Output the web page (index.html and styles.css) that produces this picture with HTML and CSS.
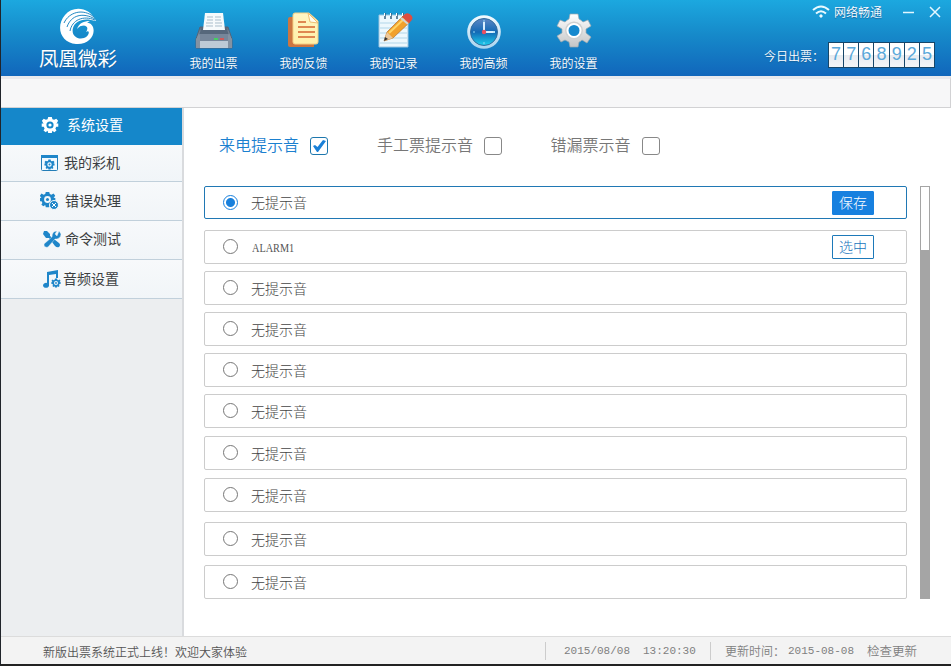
FILE: index.html
```html
<!DOCTYPE html>
<html lang="zh-CN">
<head>
<meta charset="utf-8">
<title>凤凰微彩</title>
<link rel="stylesheet" href="styles.css">
</head>
<body>
<svg class="defs" width="0" height="0">
  <defs>
    <linearGradient id="metal" x1="0" y1="0" x2="0" y2="1"><stop offset="0" stop-color="#fff"/><stop offset="1" stop-color="#c3c5c6"/></linearGradient>
    <linearGradient id="ring" x1="0" y1="0" x2="0" y2="1"><stop offset="0" stop-color="#f4fbff"/><stop offset="1" stop-color="#a9d3ee"/></linearGradient>
    <linearGradient id="body" x1="0" y1="0" x2="0" y2="1"><stop offset="0" stop-color="#59697c"/><stop offset=".5" stop-color="#8e9cac"/><stop offset="1" stop-color="#c4ced8"/></linearGradient>
    <linearGradient id="face" x1="0" y1="0" x2="0" y2="1"><stop offset="0" stop-color="#5e87c4"/><stop offset=".5" stop-color="#1269b5"/><stop offset="1" stop-color="#1ed0ee"/></linearGradient>
    <linearGradient id="paper" x1="0" y1="0" x2="0" y2="1"><stop offset="0" stop-color="#fff5c4"/><stop offset="1" stop-color="#fff0a8"/></linearGradient>
    <symbol id="gear" viewBox="-10 -10 20 20">
      <path fill-rule="evenodd" d="M-2-9H2L2.7-6.5L4.6-5.7L7-7L9-4.6 7.8-2.4 7-1.8H9.2V2H7L6 4 7.2 6.2 4.8 8 2.7 6.5 2 9H-2L-2.7 6.5-4.8 8-7.2 6.2-6 4-7 2H-9.2V-1.8H-7L-7.8-2.4-9-4.6-7-7-4.6-5.7-2.7-6.5ZM0-4A4 4 0 1 0 0 4A4 4 0 1 0 0-4Z"/><circle r="1.8"/>
    </symbol>
  </defs>
</svg>
<div class="window">
  <header class="header">
    <div class="brand">
      <svg class="brand-mark" width="38" height="38" viewBox="0 0 38 38" fill="#fff">
        <path d="M37 14C31 0 14-2 6 8C-4 20 2 36 17 37C29 38 37 29 34 20C32 15 26 14 21 19C28 17 30 21 27 25C31 22 31 29 25 31C18 33 12 28 14 21C16 14 24 10 37 14Z"/>
        <path d="M18 22C20 16 25 14 31 14C28 15 28 17 26 18C22 18 20 20 18 22Z"/>
        <path d="M5 16C10 5 24 1 35 10M8 20C12 8 24 5 36 12M11 24C13 13 24 8 36 13" fill="none" stroke="#2289c4" stroke-width="1"/>
      </svg>
      <div class="brand-name">凤凰微彩</div>
    </div>
    <nav class="nav">
      <a class="nav-item">
        <svg width="40" height="40" viewBox="0 0 40 40">
          <path d="M6 17H34L38 29V38H2V29Z" fill="url(#body)" stroke="#53657a"/><path d="M8 17H32L35 25H5Z" fill="#56677b"/>
          <path d="M11 3H29L31 20H9Z" fill="#f6fafc"/><path d="M13 7h6m2 0h6M13 10h6m2 0h6M12 13h7m2 0h7M12 16h7m2 0h7" stroke="#a9bdcb"/>
          <path d="M5 24H35V31H5Z" fill="#76869a"/><path d="M6 31H34V38H6Z" fill="#bdcad6"/><path d="M2 29L6 24V38H2ZM38 29L34 24V38H38Z" fill="#8492a2"/><path d="M20 29h4" stroke="#45cf62" stroke-width="2"/><path d="M26 29h4" stroke="#ce5959" stroke-width="2"/>
        </svg><span>我的出票</span></a>
      <a class="nav-item">
        <svg width="40" height="40" viewBox="0 0 40 40">
          <path d="M6 7H30V37H6Q4 37 4 35V9Q4 7 6 7Z" fill="#cc7641"/><path d="M11 3H25L34 11V32Q34 34 32 34H11Q9 34 9 32V5Q9 3 11 3Z" fill="url(#paper)" stroke="#f5cf84"/>
          <path d="M24 3L26 12L34 13Z" fill="#fffdf0" stroke="#eebd73"/><path d="M14 12h8M14 17h17M14 22h17M14 27h17" stroke="#df8751" stroke-width="2"/>
        </svg><span>我的反馈</span></a>
      <a class="nav-item">
        <svg width="40" height="40" viewBox="0 0 40 40">
          <path d="M5 5H34V37H5Z" fill="#edf8fd" stroke="#9ac4df"/><path d="M6 13h27M6 18h27M6 23h27M6 28h27M6 33h27" stroke="#b1d6e9"/>
          <path d="M11 3v6M17 3v6M23 3v6M29 3v6" stroke="#365e7c" stroke-width="1.5"/><path d="M10.500 3v3M16.500 3v3M22.500 3v3M28.500 3v3" stroke="#fff"/>
          <path d="M10 31L13 22L29 6L36 12L19 28Z" fill="#f1a12b" stroke="#aa6624" stroke-width=".6"/><path d="M15 23L31 8" stroke="#ffd363" stroke-width="2"/><path d="M10 31L13 22L19 28Z" fill="#ebc89a"/><path d="M10 31L11 27L14 29Z" fill="#333"/><path d="M28 7L31 4Q34 2 37 5T37 11L35 13Z" fill="#dd4d40"/><path d="M27 8L34 14" stroke="#d3d4d4" stroke-width="2"/>
        </svg><span>我的记录</span></a>
      <a class="nav-item">
        <svg width="40" height="40" viewBox="0 0 40 40"><circle cx="20" cy="22" r="16.800" fill="url(#ring)"/><circle cx="20" cy="22" r="13.500" fill="url(#face)" stroke="#336c9e"/><path d="M19 12H21V21H31V23H19Z" fill="#d8efff"/><path d="M20 10v2M20 32v2M9 22h2M29 22h2" stroke="#93d6f3"/><circle cx="20" cy="22" r="2.200" fill="#eb5061"/></svg><span>我的高频</span></a>
      <a class="nav-item">
        <svg width="40" height="40" viewBox="-20 -20 40 40"><path d="M-4-16H4L5-11Q7-10 9-8L14-10 17-4 12-1V3L17 7 13 13 8 10Q6 12 5 12L4 17H-4L-5 12Q-7 11-9 10L-13 12-17 6-12 3V-1L-17-4-14-10-9-8Q-7-10-5-11Z" fill="url(#metal)" stroke="#9ba9b0" stroke-width=".7"/><circle r="9" cy=".5" fill="#cfd0d0"/><circle r="6.500" cy=".5" fill="#1689ce" stroke="#fff" stroke-width="2"/></svg><span>我的设置</span></a>
    </nav>
    <div class="status">
      <div class="window-controls">
        <svg class="wifi" width="18" height="14" viewBox="0 0 18 14" fill="none" stroke="#e9faff" stroke-width="2"><path d="M1 5Q9-2 17 5M4 8.500Q9 4 14 8.500"/><circle cx="9" cy="11" r="1.200" fill="#fff" stroke-width="1"/></svg>
        <span class="network">网络畅通</span>
        <svg class="controls" width="39" height="14" viewBox="0 0 39 14" fill="none" stroke="#e3f7ff" stroke-width="1.500"><path d="M0 7.500H11M27 2L37 12M37 2L27 12"/></svg>
      </div>
      <div class="counter"><span>今日出票：</span><div class="digits"><b>7</b><b>7</b><b>6</b><b>8</b><b>9</b><b>2</b><b>5</b></div></div>
    </div>
  </header>
  <div class="subbar"></div>
  <div class="main">
    <aside class="sidebar">
      <a class="side-item active"><svg width="18" height="18"><use href="#gear"/></svg><span>系统设置</span></a>
      <a class="side-item"><svg width="18" height="18" viewBox="0 0 18 18"><rect x=".5" y="1.500" width="16" height="15" rx="1" fill="#f3faff" stroke="#237db7"/><path d="M0 1h17v3H0z"/><use href="#gear" x="3" y="5" width="11" height="11"/></svg><span>我的彩机</span></a>
      <a class="side-item errors"><svg width="19" height="18" viewBox="0 0 19 18"><use href="#gear" x="-1" y="-1" width="17" height="17"/><circle cx="14" cy="13" r="4.500" stroke="#f3f7fa"/><path d="M12 11L16 15M16 11L12 15" stroke="#fff"/></svg><span>错误处理</span></a>
      <a class="side-item tools"><svg width="18" height="18" viewBox="0 0 18 18"><path d="M1 1L4 1L7 4V6L16 13Q18 15 16 17Q14 18 12 16L6 8H3L0 4Z"/><path d="M16 1L18 4Q18 8 14 9L12 9L5 17Q1 18 1 14L9 7Q9 1 14 1L12 4L14 6Z" stroke="#f3f7fa" stroke-width=".4"/></svg><span>命令测试</span></a>
      <a class="side-item audio"><svg width="18" height="18" viewBox="0 0 18 18"><path d="M4 2L15 0V8H13V4L6 5V15A3 2.500 0 1 1 4 13Z"/><use href="#gear" x="8" y="8" width="10" height="10"/></svg><span>音频设置</span></a>
    </aside>
    <main class="content">
      <div class="options">
        <label class="option selected">来电提示音<svg class="box" width="18" height="18" viewBox="1 1 16 16"><path d="M3 9L5 8L7.500 10L13 3L16 4L8 15H7Z" fill="#1980d8"/></svg></label>
        <label class="option">手工票提示音<i class="box"></i></label>
        <label class="option">错漏票示音<i class="box"></i></label>
      </div>
      <div class="list-area">
        <div class="list">
          <div class="row chosen"><i class="radio"></i><span>无提示音</span><button class="btn primary">保存</button></div>
          <div class="row second"><i class="radio"></i><span class="latin">ALARM1</span><button class="btn">选中</button></div>
          <div class="row"><i class="radio"></i><span>无提示音</span></div>
          <div class="row"><i class="radio"></i><span>无提示音</span></div>
          <div class="row"><i class="radio"></i><span>无提示音</span></div>
          <div class="row"><i class="radio"></i><span>无提示音</span></div>
          <div class="row gap-8"><i class="radio"></i><span>无提示音</span></div>
          <div class="row gap-8"><i class="radio"></i><span>无提示音</span></div>
          <div class="row gap-10"><i class="radio"></i><span>无提示音</span></div>
          <div class="row gap-9"><i class="radio"></i><span>无提示音</span></div>
        </div>
        <div class="scrollbar"><div class="thumb"></div></div>
      </div>
    </main>
  </div>
  <footer class="footer">
    <span class="notice">新版出票系统正式上线！欢迎大家体验</span>
    <div class="clock"><span>2015/08/08</span><span>13:20:30</span></div>
    <div class="update"><span>更新时间：</span><span class="date">2015-08-08</span><span class="check">检查更新</span></div>
  </footer>
</div>
</body>
</html>
```
FILE: styles.css
```css
* { box-sizing: border-box; }
body { margin: 0; overflow: hidden; font-family: "Liberation Sans", "Noto Sans CJK SC", sans-serif; font-size: 12px; font-weight: 400; }
.defs { position: absolute; }
.window { width: 951px; height: 666px; display: flex; flex-direction: column; border-left: 1px solid #20242a; border-bottom: 2px solid #222; background: #fff; }
.header { height: 76px; flex: none; display: flex; color: #fff; background: linear-gradient(#1ca8df, #168aca 45%, #1166bb); text-shadow: 0 1px 1px #17609b; }
.brand { width: 168px; padding: 7px 0 0 38px; }
.brand-mark { display: block; margin-left: 20px; }
.brand-name { font-size: 19.5px; line-height: 28px; white-space: nowrap; }
.nav { display: flex; width: 450px; font-weight: 350; }
.nav-item { width: 90px; padding-top: 10px; display: flex; flex-direction: column; align-items: center; }
.nav-item span { line-height: 18px; margin-top: 5px; margin-right: 1px; }
.nav-item svg { margin-right: 1px; }
.status { flex: 1; display: flex; flex-direction: column; font-weight: 350; }
.window-controls { display: flex; align-items: center; justify-content: flex-end; height: 23px; padding-right: 9px; }
.network { margin-left: 4px; }
.controls { margin-left: 21px; }
.counter { display: flex; align-items: center; justify-content: flex-end; margin-top: 19px; padding-right: 16px; height: 26px; }
.counter > span { margin-right: 4px; }
.digits { display: flex; gap: 1px; padding: 1px; background: #164669; width: 107px; height: 26px; }
.digits b { flex: 1; font: 18px/23px "Liberation Sans", sans-serif; text-align: center; color: #5ba9da; background: linear-gradient(#fff 50%, #e7ebf0 50%, #f4f5f7); text-shadow: none; }
.subbar { height: 32px; flex: none; background: #f7f7f8; border-top: 3px solid #e9e9ed; border-bottom: 1px solid #d2d2d4; border-right: 1px solid #d2d2d4; }
.main { flex: 1; min-height: 0; display: flex; }
.sidebar { width: 183px; flex: none; background: #eceef0; border-right: 2px solid #d9dbde; }
.side-item { height: 39px; display: flex; align-items: center; padding-left: 40px; gap: 6px; font-size: 14px; color: #3c3f42; border-bottom: 1px solid #c1d0db; background: linear-gradient(#f7f9fb, #f1f5f8); fill: #1f86c9; }
.side-item span { margin-top: -2px; }
.side-item:nth-child(2) { height: 37px; gap: 5px; }
.side-item.active { height: 37px; gap: 8px; padding-bottom: 3px; color: #fff; fill: #fff; background: #1587ca; border: 0; }
.errors { padding-left: 39px; gap: 6px; }
.tools { padding: 0 0 2px 42px; gap: 4px; }
.audio { padding-left: 42px; gap: 2px; }
.content { flex: 1; }
.options { height: 78px; display: flex; align-items: center; padding-left: 35px; font-size: 16px; color: #777; font-weight: 350; }
.option { display: flex; align-items: center; gap: 11px; margin-right: 48.5px; line-height: 24px; margin-top: -2px; }
.option .box { display: block; width: 18px; height: 18px; border: 1px solid #888; border-radius: 3px; }
.option.selected { color: #1b80cf; margin-right: 49px; }
.option.selected .box { border-color: #1e77ad; }
.list-area { display: flex; margin-left: 20px; height: 413px; }
.list { width: 703px; }
.row { height: 34px; margin-top: 7px; border: 1px solid #ccc; border-radius: 2px; display: flex; align-items: center; padding: 0 32px 1px 18px; font-size: 14px; font-weight: 300; color: #444; }
.row.chosen { height: 33px; margin-top: 0; border-color: #2078b4; padding-bottom: 0; }
.row.chosen > span { margin-top: -2px; }
.row.second { margin-top: 11px; }
.row.gap-8 { margin-top: 8px; }
.row.gap-9 { margin-top: 9px; }
.row.gap-10 { margin-top: 10px; }
.radio { width: 15px; height: 15px; border: 1px solid #777; border-radius: 50%; margin-right: 13px; }
.chosen .radio { border-color: #1980dc; background: radial-gradient(circle, #1980dc 4px, #fff 5px); }
.latin { font: 13px "Liberation Serif", serif; color: #555; transform: scaleX(.79); transform-origin: left; margin-left: 1px; padding-top: 2px; }
.btn { margin-left: auto; width: 42px; height: 24px; padding: 0; border: 1px solid #1d79b9; border-radius: 1px; color: #1b76bd; background: #fff; font: inherit; line-height: 20px; }
.second .btn { margin-top: 1px; }
.btn.primary { color: #fff; background: #1780df; border-color: #1780df; }
.scrollbar { width: 10px; height: 413px; margin-left: 13px; background: #a5a5a5; padding: 1px; }
.thumb { height: 63px; background: #fff; }
.footer { height: 28px; flex: none; border-top: 1px solid #dcdcdc; background: #f3f3f3; display: flex; align-items: center; color: #555; font-weight: 350; }
.notice { margin-left: 42px; width: 502px; padding-top: 2px; }
.clock, .update { display: flex; align-items: center; height: 18px; border-left: 1px solid #ccc; color: #808080; }
.clock { width: 165px; padding-left: 18px; gap: 13px; font: 11px "Liberation Mono", monospace; }
.update { padding-left: 14px; white-space: nowrap; }
.update > span:first-child, .check { margin-top: -1px; }
.date { font: 11px "Liberation Mono", monospace; margin-left: 3px; }
.check { margin-left: 13px; font-size: 12.5px; }
```
